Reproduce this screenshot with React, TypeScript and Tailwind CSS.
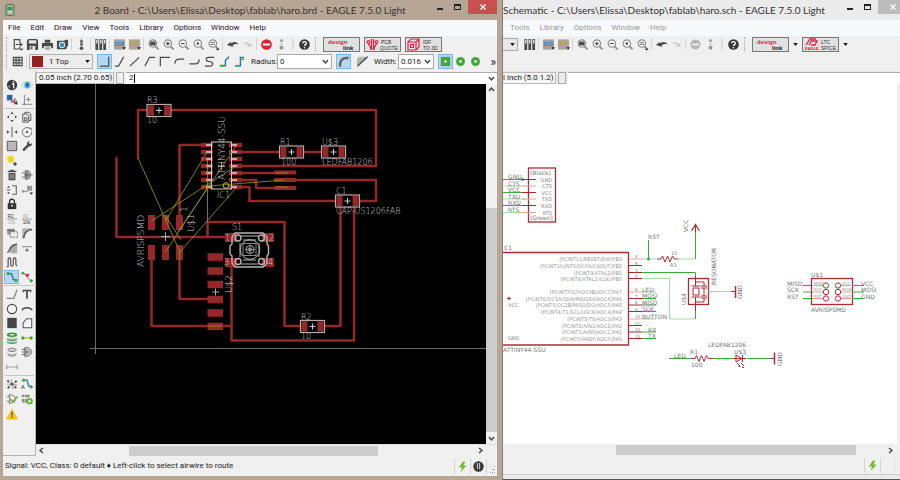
import type { ReactNode } from 'react';

const DARK = '#4a4a4a';
const RED = '#942727';
const SILVER = '#cacaca';
const GREEN = '#3ea63e';
const PALE_GREEN = '#a5dba5';
const MAROON = '#a52f35';
const PALE_RED = '#e5a3a3';

/* ---------- icons, all drawn on a 14 x 14 grid ---------- */

const magnifier = (inner: ReactNode) => (
  <g fill="none" stroke="#8a8a8a" strokeWidth="1.2">
    <circle cx="6.3" cy="6" r="4" fill="#fafafa" />
    <path d="M9.2 9 12.4 12.2" strokeWidth="1.8" />
    {inner}
  </g>
);

const pencil = <path d="M10 10h4l-2 2.4z" fill="#222" />;

const icons: Record<string, ReactNode> = {
  open: <g fill="none" stroke={DARK} strokeWidth="1.2"><path d="M9.5 5V1.8H3.5v10h6V9.5" /><path d="M5 7h6.500M9.5 5l2.300 2-2.300 2" /><path d="M9.500 11.500h4l-2 2z" fill="#222" stroke="none" /></g>,
  save: <g><path d="M1 2.500 2.500 1h9L13 2.500V13H1z" fill={DARK} /><path d="M3 2.500h8v3.500H3zM4 8.500h6V13H4z" fill="#e8e8e8" /><path d="M5 9.500h2V12H5z" fill={DARK} /></g>,
  print: <g fill={DARK}><path d="M4 2h6v3H4zM1 5.500h12V11h-2V9H3v2H1z" /><path d="M4.500 10h5v2.500h-5z" fill="#999" /></g>,
  cam: <g><path d="M1 3h8l1-1h3v7h-1l-1 3H1z" fill={DARK} /><circle cx="6.500" cy="7.500" r="3.400" fill="#eee" /><circle cx="6.500" cy="7.500" r="2.500" fill="#2196c9" /></g>,
  swap: <g fill={DARK}><path d="M7 1 9 4H5z" /><rect x="5.500" y="4.500" width="3" height="4" fill="#777" /><circle cx="7" cy="11" r="1.900" /></g>,
  library: <g fill={DARK}><path d="M1.500 1h3v12h-3zM5.800 1h3v12h-3zM10 1h3v12h-3z" /><path d="M2.300 2h1.400v4H2.300zM6.600 2H8v4H6.600zM10.800 2h1.400v4h-1.400z" fill="#eee" /></g>,
  scr: <g><path d="M1 1.500h12v11H1z" fill="#a3a3a3" /><text x="1.500" y="8.500" fontSize="5" fontWeight="700" fill="#3c7cb4" fontFamily="Liberation Sans, sans-serif">SCR</text>{pencil}</g>,
  ulp: <g><path d="M1 1.500h12v11H1z" fill="#aaa59e" /><text x="1.500" y="8.500" fontSize="5" fontWeight="700" fill="#d69534" fontFamily="Liberation Sans, sans-serif">ULP</text>{pencil}</g>,
  zoomFit: magnifier(<path d="M4 4.500h4.600v3H4z" fill={DARK} stroke={DARK} />),
  zoomIn: magnifier(<path d="M4.300 6h4M6.300 4v4" stroke={DARK} />),
  zoomOut: magnifier(<path d="M4.300 6h4" stroke={DARK} />),
  zoomRedraw: magnifier(<circle cx="6.300" cy="6" r=".8" fill={DARK} stroke={DARK} />),
  zoomSelect: magnifier(<><path d="M4 5h4.600M4 7h4.600" /><path d="M9.500 11.500h4l-2 2z" fill="#222" stroke="none" /></>),
  undo: <g><path d="M1 7.500 5.500 4v2c3-2.500 6-2 8 1-2.500-1-4.800-.5-6.500 1.300l1.200 1.500z" fill={DARK} /></g>,
  redo: <g><path d="M12.500 9 9.500 5v1.500C7 4 4 4 1.500 6c3-.5 5 .5 6 2.500L6 10z" fill="#cfcfcf" /></g>,
  stop: <g><circle cx="7" cy="7" r="5.700" fill="#d9232e" /><path d="M3.200 5.900h7.600v2.200H3.200z" fill="#fff" /></g>,
  stopOff: <g><circle cx="7" cy="7" r="5.500" fill="#b5b5b5" /><path d="M3.200 6h7.600v2H3.200z" fill="#f0f0f0" /></g>,
  traffic: <g fill="#9a9a9a"><circle cx="7" cy="3" r="1.600" /><circle cx="7" cy="6.500" r="1.200" fill="#c5c5c5" /><circle cx="7" cy="10.500" r="2.200" /></g>,
  help: <g><circle cx="7" cy="7" r="5.700" fill="#383838" /><path d="M5 5.700c.2-2.500 4-2.300 4 0 0 1.500-2 1.300-2 3" fill="none" stroke="#fff" strokeWidth="1.500" /><circle cx="7" cy="10.500" r=".9" fill="#fff" /></g>,
  grid: <path d="M2 2.500h10.500M2 5.500h10.500M2 8.500h10.500M2 11.500h10.500M2.500 2v10M5.500 2v10M8.500 2v10M12 2v10" stroke={DARK} strokeWidth="1.200" fill="none" />,
  bend0: <path d="M2 12h9.500V2" fill="none" stroke={DARK} strokeWidth="1.300" />,
  bend1: <path d="M2 12h4L11.500 2" fill="none" stroke={DARK} strokeWidth="1.300" />,
  bend2: <path d="M2 12 12 2.500" fill="none" stroke={DARK} strokeWidth="1.300" />,
  bend3: <path d="M2 12 7 2.500h6" fill="none" stroke={DARK} strokeWidth="1.300" />,
  bend4: <path d="M2.500 12V2.500H13" fill="none" stroke={DARK} strokeWidth="1.300" />,
  bend5: <path d="M2 9.500C2 5.500 4 4.500 7 4.500h5" fill="none" stroke={DARK} strokeWidth="1.300" />,
  bend6: <path d="M1.500 9.500h6c3.500 0 4.500-1.500 4.500-5" fill="none" stroke={DARK} strokeWidth="1.300" />,
  bend7: <path d="M12 2.500H6C2 2.500 3 7 6.500 7c5 0 5 5 1 5H2" fill="none" stroke={DARK} strokeWidth="1.300" />,
  bend8: <g fill="none" strokeWidth="1.500"><path d="M3 11.500h5V6l4-4" stroke="#2573b5" /><path d="M2 11.500h5" stroke="#44a838" strokeWidth="2" /></g>,
  bend9: <g fill="none" strokeWidth="1.500"><path d="M3 11.500h5V2.500h4" stroke="#2573b5" /><path d="M2 11.500h4M9 4.500h3" stroke="#44a838" strokeWidth="1.500" /></g>,
  miterRound: <g><path d="M2 13V9c0-4 3-7 7-7h4v3H9C6 5 5 7 5 9v4z" fill="#9b9b9b" /><path d="M3 12.500C3 6 6 3 12 2.500" fill="none" stroke={DARK} strokeWidth="1.300" /></g>,
  miterStraight: <g><path d="M1 12V4l2-2h10z" fill="#b5b5b5" /><path d="M1.500 12 12.500 2" stroke={DARK} strokeWidth="1.500" /></g>,
  viaSquare: <g><rect x="2" y="2" width="10" height="10" fill="#45a63c" /><circle cx="7" cy="7" r="1.300" fill="#fff" /></g>,
  viaRound: <g><circle cx="7" cy="7" r="4.800" fill="#45a63c" /><circle cx="7" cy="7" r="1.400" fill="#fff" /></g>,
  info: <g><circle cx="7" cy="7" r="6" fill="#383838" /><path d="M7 6.500 9 5v6" fill="none" stroke="#fff" strokeWidth="1.500" /><path d="M1 8.500 5 7v4z" fill="#888" /><circle cx="8.500" cy="3" r=".9" fill="#fff" /></g>,
  eye: <g><path d="M.8 7C4 2 10.500 2 13.200 7 10.500 12 4 12 .8 7z" fill="#fff" stroke="#a9b7c0" /><circle cx="7.300" cy="7" r="3.400" fill="#2fa2d8" /><circle cx="7.300" cy="7" r="1.200" fill="#134" /></g>,
  layers: <g><path d="M1 1h6.500v6.500H1z" fill="#2766a8" /><path d="M6 7.500h3.500V5h1.500v5H6z" fill="#cf3556" /><path d="M9 10h2.500V7.500H13V12H9z" fill="#4b9e54" />{pencil}</g>,
  mark: <path d="M4 1v12M1 12h12M6 6.500h5M8.500 4v5" stroke="#777" fill="none" strokeWidth="1" />,
  move: <g fill={DARK}><path d="m7 1 1.800 2.500H5.200zM7 13l1.800-2.500H5.200zM1 7l2.500-1.800v3.600zM13 7l-2.500-1.800v3.600z" /><path d="M4 4h1v1H4zM9 4h1v1H9zM4 9h1v1H4zM9 9h1v1H9z" fill="#999" /></g>,
  copy: <g fill="#e8e8e8" stroke={DARK}><path d="M4.500 1.500h5l2 2V11h-7z" /><path d="M2 3.500h5L9 5.500V13H2z" /><path d="M4 8h3v3H4z" fill="none" /></g>,
  mirror: <g fill={DARK}><path d="M6.500 1h1v12h-1zM1 5l3 2-3 2zM13 5l-3 2 3 2z" /></g>,
  rotate: <g fill="none" stroke="#666"><path d="M10.500 3A5.500 5.500 0 1 0 12.500 7" /><path d="M9 2.500h3v3" /><circle cx="7" cy="7" r="1" fill="#333" /></g>,
  group: <path d="M1.500 1.500h11v11h-11z" fill="#b8b8b8" stroke={DARK} />,
  change: <path d="M1.500 11 7 5.500C6.500 3 8 1.200 10.500 1.500L9 3.500l1.500 1.500 2-1.500c.7 2.500-1 4.500-3.500 4L3.500 13z" fill={DARK} />,
  cut: <g><circle cx="5.500" cy="5" r="4.200" fill="#f7d51b" /><circle cx="10.500" cy="10.500" r="2" fill={DARK} /></g>,
  trash: <g fill={DARK}><path d="M2 2h10v1.500H2zM5 1h4v1H5zM3 4.500h8V13H3z" /><path d="M5 5.500v6M7 5.500v6M9 5.500v6" stroke="#ccc" strokeWidth=".8" /></g>,
  add: <g fill="#aaa" stroke="#666"><path d="M5 2h2c3 0 4 2 4 5s-1 5-4 5H5zM1 4.500h4M1 9.500h4M11 7h2.500" /><path d="M4 7h6M7 4v6" stroke={DARK} /></g>,
  pinswap: <g fill="none" stroke="#666" strokeWidth="1.300"><path d="M7 2h5v10H7" /><path d="m3 2 1.600 2.500H1.400zM3 12l1.600-2.500H1.400z" fill={DARK} stroke="none" /><path d="M1 7h4" /></g>,
  replace: <g><path d="M1 7h3v3H1zM7 2h6v6H7z" fill="#999" /><path d="M4 8.500h4" stroke="#777" />{pencil}</g>,
  lock: <g><path d="M2 6h10v7H2z" fill="#333" /><path d="M4.200 6V4c0-3.300 5.600-3.300 5.600 0v2" fill="none" stroke="#333" strokeWidth="1.600" /><circle cx="7" cy="9" r="1" fill="#eee" /></g>,
  name: <g fontSize="5.500" fontFamily="Liberation Sans, sans-serif"><text x="2" y="5.500" fill="#333">R2</text><path d="M1 7h12" stroke="#777" strokeWidth=".8" /><text x="2" y="13" fill="#aaa">10k</text></g>,
  value: <g fontSize="5.500" fontFamily="Liberation Sans, sans-serif"><text x="2" y="5.500" fill="#aaa">R2</text><path d="M1 7h12" stroke="#777" strokeWidth=".8" /><text x="2" y="13" fill="#333">10k</text></g>,
  smash: <g><path d="M1.500 2h9v7h-9z" fill="#999" /><path d="M5 5.500h8.500V12H5z" fill="#eee" stroke="#666" strokeDasharray="2 1" /><path d="M1 4h9" stroke="#555" /></g>,
  miter: <g><path d="M1.500 13V1.500H13V4C8 4 5 7 5 13z" fill="#b5b5b5" /><path d="M3 13C3 7 7 3 13 3" fill="none" stroke={DARK} strokeWidth="1.500" /></g>,
  split: <g><path d="M4 13V6l3-3h6v10z" fill="#aaa" /><path d="M1.500 12.500C4 12 4 3 13 2.500" fill="none" stroke={DARK} strokeWidth="1.300" /></g>,
  optimize: <g stroke="#777" fill="none"><path d="M1 5.500h12" /><path d="M5 9.500h4M7 7.500v4" stroke={DARK} /></g>,
  meander: <path d="M1 12.500h1.500V4c0-2.500 3-2.500 3 0v6c0 2.500 3 2.500 3 0V4c0-2.500 3-2.500 3 0v6l1.500 2" fill="none" stroke={DARK} strokeWidth="1.300" />,
  route: <g><path d="M2 3h4.500l2 7H13" fill="none" stroke="#2573b5" strokeWidth="1.600" /><circle cx="2.500" cy="3" r="1.900" fill="#3ba43b" /><circle cx="11.500" cy="11" r="1.900" fill="#3ba43b" /></g>,
  ripup: <g><path d="M2 3h3l3 5 4 4" fill="none" stroke="#9aa" strokeWidth="1.300" /><path d="m4 4 6-1-2 5z" fill="#d2315a" /><circle cx="2" cy="2.500" r="1.600" fill="#3ba43b" /><circle cx="12" cy="11.500" r="1.800" fill="#3ba43b" /></g>,
  wire: <path d="M1 12h8l4-10" fill="none" stroke="#888" strokeWidth="1.500" />,
  text: <path d="M2 2h10v3h-1.500V3.800H8V12.500H6V3.800H3.500V5H2z" fill={DARK} />,
  circle: <circle cx="7" cy="7" r="5.400" fill="none" stroke={DARK} strokeWidth="1.300" />,
  arc: <path d="M1 8.500c2-4 10-4 12 0" fill="none" stroke={DARK} strokeWidth="1.600" />,
  rect: <path d="M1.500 1h11v12h-11z" fill="#454545" />,
  polygon: <path d="M2.500 12.500V7l4-5h6v10.500z" fill="#f5f5f5" stroke="#555" strokeWidth="1.200" />,
  via: <g><path d="M2 4.500v5c0 4 10 4 10 0v-5z" fill="#d9d9d9" /><ellipse cx="7" cy="3.200" rx="6" ry="2.500" fill="#35a045" /><ellipse cx="7" cy="3.200" rx="2.800" ry=".8" fill="#eee" /><path d="M1 7c1 2.500 11 2.500 12 0v1.500c-1 2.500-11 2.500-12 0zM1 10.500c1 2.500 11 2.500 12 0V12c-1 2.500-11 2.500-12 0z" fill="#35a045" /></g>,
  signal: <g><path d="M2 7h10" stroke="#e5a41c" strokeWidth="1.500" /><circle cx="2.200" cy="7" r="1.900" fill="#3ba43b" /><circle cx="11.800" cy="7" r="1.900" fill="#3ba43b" /></g>,
  hole: <g fill="#ccc" stroke="#777"><ellipse cx="7" cy="4.500" rx="5" ry="2" /><path d="M2 8.500c1 2.500 9 2.500 10 0M2 10c1 2.500 9 2.500 10 0" fill="none" /></g>,
  attribute: <g fill="none" stroke="#777"><path d="M4.500 1.500c6 0 8 3 8 5.500s-3 5.500-8 5.500z" fill="#bbb" /><path d="M1 4h5M1 7h8M1 10h5" stroke={DARK} /></g>,
  dimension: <g stroke="#777" fill="none"><path d="M1 4.500v5M13 4.500v5" /><path d="M2 7h10" strokeDasharray="2 1" /></g>,
  ratsnest: <g stroke={DARK} strokeWidth=".6" fill={DARK}><path d="M2 3.500 12 11M2 11 12 4M6 1.500 8 13M1 7l12 1" /><circle cx="2.500" cy="3.500" r="1" /><circle cx="11.500" cy="4" r="1" /><circle cx="3" cy="11" r="1" /><circle cx="11" cy="11" r="1" /><circle cx="7" cy="7" r="1.200" /></g>,
  auto: <g><path d="M3 2.500h4l2 7h3.500" fill="none" stroke="#2573b5" strokeWidth="1.600" /><circle cx="3" cy="2.500" r="1.800" fill="#3ba43b" /><circle cx="12" cy="10.500" r="1.800" fill="#3ba43b" /><text x="0" y="13" fontSize="6.500" fill="#222" fontFamily="Liberation Sans, sans-serif">A</text></g>,
  erc: <g fill="none" stroke="#666"><path d="M3.500 2C8 2 11 4 11.500 7 11 10 8 12 3.500 12 5 9 5 5 3.500 2zM1 4.500h3.500M1 9.500h3.500" /><path d="m5 7 3 3 5.500-6" stroke="#6aba2e" strokeWidth="1.800" /></g>,
  drc: <g><path d="M1 2h9v3H1zM1 7h6v4H1z" fill="#8c8c8c" /><path d="M4 2v8" stroke="#ddd" /><circle cx="10" cy="9.500" r="3.700" fill="#5fb52a" /><circle cx="10" cy="9.500" r="1.500" fill="#eee" /></g>,
  errors: <g><path d="M7 1 13.500 13H.5z" fill="#f7c51d" stroke="#e3ac10" strokeWidth=".6" /><path d="M6.300 5h1.500l-.3 4h-.9zM6.300 10h1.500v1.400H6.300z" fill="#222" /></g>,
  bolt: <path d="M7.500 1.500 3 8h3.500L5 13l6.500-7H8l2-4.500z" fill="#76bb2c" />,
  status: <g><circle cx="7" cy="7" r="5.600" fill="#383838" /><path d="M5.300 3h3.400v7H5.300z" fill="#eee" /><path d="M6.200 1.500h1.600v9.500H6.200z" fill="#383838" /></g>,
};

function Icon({ name, size = 13 }: { name: string; size?: number }) {
  return <svg width={size} height={size} viewBox="0 0 14 14" className="block shrink-0">{icons[name]}</svg>;
}

function Tool({ name, active = false }: { name: string; active?: boolean }) {
  return (
    <button
      type="button"
      aria-label={name}
      className={`flex h-[15px] w-[15px] shrink-0 items-center justify-center ${active ? 'bg-[#b5d8f5] outline outline-[#7fb6e6] -outline-offset-1' : ''}`}
    >
      <Icon name={name} />
    </button>
  );
}

function Tools({ names }: { names: string[] }) {
  return <div className="flex shrink-0">{names.map((n, i) => <Tool key={i} name={n} />)}</div>;
}

const Sep = () => <div className="mx-px h-3 w-0.5 shrink-0 border-l border-[#d5d5d5]" />;
const WideSep = () => <div className="mx-[3px] h-3 w-0.5 shrink-0 border-x border-[#dcdcdc]" />;
const Handle = () => <div className="ml-[3px] mr-0.5 h-[14px] w-0.5 shrink-0 border-l border-dotted border-[#a5a5a5]" />;

function Chevron({ dir = 'down' }: { dir?: 'up' | 'down' | 'left' | 'right' }) {
  const d = { up: 'M1 5 3.500 2 6 5', down: 'M1 2 3.500 5 6 2', left: 'M5 1 2 3.500 5 6', right: 'M2 1 5 3.500 2 6' }[dir];
  return <svg width="7" height="7" viewBox="0 0 7 7" className="block shrink-0"><path d={d} fill="none" stroke="#444" strokeWidth="1.400" /></svg>;
}

const Caret = () => <svg width="5" height="3" viewBox="0 0 6 4" className="block shrink-0"><path d="M0 0h6L3 4z" fill="#111" /></svg>;

/* ---------- brand buttons ---------- */

const brandBtn = 'flex h-[15px] w-[37px] shrink-0 items-center justify-center border border-[#777] bg-[#e0e0e0]';
const brandText = { fontFamily: 'Liberation Sans, sans-serif' };

function DesignLink() {
  return (
    <button type="button" className={brandBtn}>
      <svg width="33" height="13" viewBox="0 0 33 13" style={brandText}>
        <text x="3" y="6" fontSize="6" fontWeight="700" fill="#dc2346">design</text>
        <text x="18" y="12" fontSize="6" fontWeight="700" fill="#222">link</text>
      </svg>
    </button>
  );
}

function PcbQuote() {
  return (
    <button type="button" className={brandBtn}>
      <svg width="33" height="13" viewBox="0 0 33 13" style={brandText}>
        <g fill="none" stroke="#dc2346" strokeWidth="1.200"><circle cx="2.500" cy="4" r="1.400" /><circle cx="10.500" cy="4" r="1.400" /><path d="M2.500 5.500C2.500 8 5 7 5 12M10.500 5.500C10.500 8 8 7 8 12M5.500 1v11M7.500 1v11" /></g>
        <text x="15" y="6" fontSize="5" fill="#333">PCB</text>
        <text x="14" y="12" fontSize="5" fill="#333">QUOTE</text>
      </svg>
    </button>
  );
}

function IdfTo3d() {
  return (
    <button type="button" className={brandBtn}>
      <svg width="33" height="13" viewBox="0 0 33 13" style={brandText}>
        <g fill="none" stroke="#dc2346" strokeWidth="1.200"><path d="M1 4 4 1h8v8l-3 3H1zM1 4h8v8M9 4l3-3" /><path d="M3.500 6.500h3v3h-3z" /></g>
        <text x="16" y="6" fontSize="5" fill="#333">IDF</text>
        <text x="16" y="12" fontSize="5" fill="#333">TO 3D</text>
      </svg>
    </button>
  );
}

function LtcSpice() {
  return (
    <button type="button" className={brandBtn}>
      <svg width="33" height="13" viewBox="0 0 33 13" style={brandText}>
        <g fill="none" stroke="#dc2346" strokeWidth="1.300"><path d="M2 7 6 1h6M5 7l3-5M7 7h4l2-4H8" /></g>
        <text x="1" y="12" fontSize="4" fontWeight="700" fill="#dc2346">EAGLE</text>
        <text x="17" y="6" fontSize="5" fill="#333">LTC</text>
        <text x="17" y="12" fontSize="5" fill="#333">SPICE</text>
      </svg>
    </button>
  );
}

/* ---------- board drawing, in window coordinates ---------- */

const traces = [
  'M138 158V110H148', 'M170 110H376V166H240', 'M116.500 158V237H226', 'M204 145H179.500V216',
  'M240 152H280', 'M302 152H322', 'M240 173H276', 'M240 180H256V188H276', 'M240 187H249.500V201H337',
  'M290 180H376V201H358', 'M340.500 205V326H324', 'M354 205V340.500H231.500V262', 'M207.500 237V222H284.500V326H301',
  'M151.500 250V326H231', 'M179.500 250V299H210',
];

const airwires = [
  'M138 158 180 252', 'M151.500 221 236 166', 'M165.500 221 207 152', 'M178 232 236 146',
  'M180 252 236 188', 'M165.500 252 208 187', 'M207.500 159V222', 'M208 186 284 180', 'M179.500 252V260',
  'M165 215 181 240', 'M276 173H288', 'M276 187H288', 'M208 326H222',
];

const chipRows = [145, 152, 159, 166, 173, 180, 187];

function Smd({ x, y }: { x: number; y: number }) {
  return (
    <g>
      <rect x={x} y={y - 6} width="24" height="12" fill="#000" />
      <path d={`M${x + 1} ${y - 5}h6v10h-6zM${x + 17} ${y - 5}h6v10h-6z`} fill={RED} />
      <rect x={x} y={y - 6} width="24" height="12" fill="none" stroke="#b9a9a9" strokeWidth="1.200" />
      <path d={`M${x + 9} ${y}h6M${x + 12} ${y - 3}v6`} stroke="#ccc" />
    </g>
  );
}

function Board() {
  return (
    <svg width="450" height="360" viewBox="36 84 450 360" className="block" style={{ fontFamily: 'DejaVu Sans, sans-serif' }}>
      <path d="M95.500 84V354M90 348.500H486" stroke="#6a6a6a" fill="none" />
      <g fill="none" stroke={RED} strokeWidth="2.500" strokeLinecap="round" strokeLinejoin="round">
        {traces.map((d) => <path key={d} d={d} />)}
      </g>
      <g fill={RED}>
        {[151.5, 165.5, 179.5].map((x) => <path key={x} d={`M${x - 3.5} 215h7v15h-7zM${x - 3.5} 245h7v15h-7z`} />)}
        {[257, 271, 284.5, 299.5, 313, 326.5].map((y) => <rect key={y} x="207.500" y={y - 3.75} width="15.500" height="7.500" />)}
        {chipRows.map((y) => <path key={y} d={`M201 ${y - 2.2}h12v4.400h-12zM229 ${y - 2.2}h13v4.400h-13z`} />)}
        {[172.5, 180, 188].map((y) => <rect key={y} x="274" y={y - 2} width="22" height="4" />)}
        <path d="M225 233h12v9h-12zM262 233h12v9h-12zM225 258h12v9h-12zM262 258h12v9h-12z" />
      </g>
      {chipRows.map((y) => <path key={y} d={`M206 ${y}h5M231 ${y}h6`} stroke="#c4aaaa" strokeWidth="2" />)}
      <g fill="none" stroke={SILVER}>
        <rect x="211.500" y="142" width="20" height="47" stroke="#ccc" />
        <circle cx="226" cy="185.500" r="2.800" stroke="#c8c860" />
        <path d="M161 236.500h9M165.500 232v9M212 292h7M215.500 288.500v7M218 166h7M221.500 162v8" stroke="#aaa" />
      </g>
      <Smd x={147} y={110.5} />
      <Smd x={279.5} y={152} />
      <Smd x={321.5} y={152} />
      <Smd x={335.5} y={201} />
      <Smd x={300.5} y={326.5} />
      {/* push button */}
      <g fill="none" stroke="#b5b5b5">
        <path d="M235 233h28l4 4v7l1.500 2v8l-1.500 2v7l-4 4h-28l-3-4v-7l-2-2v-8l2-2v-7z" strokeWidth="1.400" />
        <path d="M241 236h17M241 264h17M240 243v14M259 243v14M243 240h13M243 260h13" />
        <circle cx="250" cy="249.500" r="9.800" />
        <rect x="243" y="243.500" width="13" height="12" stroke="#888" />
        <circle cx="250" cy="249.500" r="4" />
        <circle cx="250" cy="249.500" r="1.500" fill="#ccc" />
        <path d="M245 249.500h10M250 244.500v10" stroke="#888" />
        {[238, 261.5].map((x) => [238, 261.5].map((y) => <circle key={`${x}-${y}`} cx={x} cy={y} r="3" strokeWidth="1.400" />))}
      </g>
      <g fill="none" stroke="#9b9b22" strokeWidth=".8">
        {airwires.map((d) => <path key={d} d={d} />)}
      </g>
      <g fill={SILVER} fontSize="8" fontWeight="200">
        <text x="147" y="103">R3</text>
        <text x="147" y="123">10</text>
        <text x="280" y="145">R1</text>
        <text x="281" y="165">100</text>
        <text x="322" y="145">U$3</text>
        <text x="322" y="165">LEDFAB1206</text>
        <text x="336" y="194">C1</text>
        <text x="336" y="214">CAP-US1206FAB</text>
        <text x="217" y="198">IC1</text>
        <text x="232" y="230">S1</text>
        <text x="301" y="320">R2</text>
        <text x="301" y="339">10</text>
        <text x="225" y="241">1</text>
        <text x="269" y="241">2</text>
        <text x="224" y="265">3</text>
        <text x="268" y="265">4</text>
      </g>
      <g fill={SILVER} fontSize="9" fontWeight="200">
        <text transform="translate(225 180) rotate(-90)">ATTINY44-SSU</text>
        <text transform="translate(144 267) rotate(-90)">AVRISPSMD</text>
        <text transform="translate(194 232) rotate(-90)">U$1</text>
        <text transform="translate(187 212) rotate(-90)">1</text>
        <text transform="translate(232 293) rotate(-90)">U$2</text>
      </g>
    </svg>
  );
}

/* ---------- schematic drawing, in window coordinates ---------- */

const header = [
  { net: 'GND', y: 179.5 }, { net: 'CTS', y: 186 }, { net: 'VCC', y: 192.5 },
  { net: 'TXD', y: 199 }, { net: 'RXD', y: 205.5 }, { net: 'RTS', y: 212.5 },
];

const pins = [
  { n: 4, y: 259, name: '(PCINT11/RESET/DW)PB3' },
  { n: 5, y: 265.5, name: '(PCINT10/INT0/OC0A/CKOUT)PB2' },
  { n: 3, y: 272.5, name: '(PCINT9/XTAL2)PB1' },
  { n: 2, y: 278.5, name: '(PCINT8/XTAL1/CLKI)PB0' },
  { n: 6, y: 292, name: '(PCINT7/ICP/OC0B/ADC7)PA7', net: 'LED' },
  { n: 7, y: 298.5, name: '(PCINT6/OC1A/SDA/MOSI/DI/ADC6)PA6', net: 'MOSI' },
  { n: 8, y: 305, name: '(PCINT5/OC1B/MISO/DO/ADC5)PA5', net: 'MISO' },
  { n: 9, y: 311.5, name: '(PCINT4/T1/SCL/USCK/ADC4)PA4', net: 'SCK' },
  { n: 10, y: 319, name: '(PCINT3/T0/ADC3)PA3', net: 'BUTTON' },
  { n: 11, y: 325.5, name: '(PCINT2/AIN1/ADC2)PA2' },
  { n: 12, y: 332, name: '(PCINT1/AIN0/ADC1)PA1', net: 'RX' },
  { n: 13, y: 338.5, name: '(PCINT0/AREF/ADC0)PA0', net: 'TX' },
];

const isp = [
  { l: 'MISO', r: 'VCC', y: 285.5 }, { l: 'SCK', r: 'MOSI', y: 292 }, { l: 'RST', r: 'GND', y: 298.5 },
];

function Schematic() {
  return (
    <svg width="394" height="360" viewBox="503 84 394 360" className="block" style={{ fontFamily: 'DejaVu Sans, sans-serif' }}>
      <g fill="none" stroke={MAROON}>
        <rect x="528.500" y="168" width="27" height="54" strokeWidth="1.300" />
        <path d="M503 252.500H628.500V345H503" strokeWidth="1.300" />
        <path d="M507 298.500h4M509 296.500v4" />
        <rect x="688.500" y="278.500" width="20" height="26" strokeWidth="1.300" />
        <path d="M695.500 276v10M693 288h6v7h-6zM691.500 286h9M691.500 297h9M695.500 297v14M696 282h8v4M701 286h6M701 288h6M704 288v8M701 296h6M701 298h6M704 298v4h-8" />
        <rect x="811.500" y="278.500" width="41" height="26" strokeWidth="1.300" />
        <path d="M695.500 232V225M691.500 231 695.500 224.500 699.500 231" strokeWidth="1.200" />
        <path d="M657 259h4l1.500-3 2.500 6 2.500-6 2.500 6 2.500-6 2 3h4" />
        <path d="M690 358.500h5l1.500-3 2.500 6 2.500-6 2.500 6 2.500-6 2 3h5" />
        <path d="M731 291.500h4M770 358.500h4M732 358.500h14" />
        <path d="M735.500 286v12M774.500 352.500v12" strokeWidth="1.500" />
        <path d="M736 355v7l6-3.500zM742.500 355v7" />
        <path d="m737 363 3 3M741 363l3 3M738.500 366.500h2M742 367.500h2" />
      </g>
      <g fill="none" stroke={PALE_RED}>
        <path d="M708 291.500h8" />
      </g>
      <g fill="none" stroke={PALE_GREEN}>
        <path d="M679 259h16M642 278.500h27.500v40.500H695M716 291.500h15M642 259h14" />
      </g>
      <g fill="none" stroke={GREEN}>
        <path d="M648.500 240v19M695.500 259v-27M642 272.500h53.500v4M695.500 311v8M669 358.500h22M713 358.500h20M747 358.500h23" />
      </g>
      <circle cx="648.500" cy="259" r="1.500" fill={GREEN} />
      <circle cx="522.500" cy="179.500" r="1.500" fill={GREEN} />

      {header.map((h, i) => (
        <g key={h.net}>
          <path d={`M503 ${h.y}h22`} stroke={i % 2 ? PALE_GREEN : GREEN} />
          <path d={`M522 ${h.y}h14`} stroke={i % 2 ? PALE_RED : MAROON} />
          <text x="508" y={h.y - 0.5} fontSize="6" fill="#777">{h.net}</text>
          <text x="552" y={h.y + 2} fontSize="5" fill="#888" textAnchor="end">{h.net}</text>
        </g>
      ))}

      {pins.map((p) => (
        <g key={p.n}>
          <path d={`M629 ${p.y}h13`} stroke={[4, 6, 10].includes(p.n) ? PALE_RED : MAROON} />
          {p.net && <path d={`M642 ${p.y}h14`} stroke={[6, 10].includes(p.n) ? PALE_GREEN : GREEN} />}
          <text x="635" y={p.y - 1} fontSize="4" fill="#777">{p.n}</text>
          <text x="622" y={p.y + 2} fontSize="5" fill="#999" textAnchor="end">{p.name}</text>
          {p.net && <text x={p.n > 11 ? 648 : 642} y={p.y - 0.5} fontSize="6" fill="#777">{p.net}</text>}
        </g>
      ))}

      {isp.map((p) => (
        <g key={p.l} fill="none">
          <path d={`M803 ${p.y}h8M853 ${p.y}h11`} stroke={GREEN} />
          <path d={`M812 ${p.y}h11M841 ${p.y}h12`} stroke={PALE_RED} />
          <circle cx="826" cy={p.y} r="2.700" stroke={MAROON} />
          <circle cx="838" cy={p.y} r="2.700" stroke={MAROON} />
          <text x="787" y={p.y} fontSize="6" fill="#777">{p.l}</text>
          <text x="861" y={p.y} fontSize="6" fill="#777">{p.r}</text>
          <text x="814" y={p.y - 1} fontSize="4" fill="#999">{p.l}</text>
          <text x="842" y={p.y - 1} fontSize="4" fill="#999">{p.r}</text>
        </g>
      ))}

      <g fill="#777" fontSize="6">
        <text x="530" y="175">(Black)</text>
        <text x="530" y="220">(Green)</text>
        <text x="504" y="250">C1</text>
        <text x="503" y="352">ATTINY44-SSU</text>
        <text x="648" y="239">RST</text>
        <text x="690" y="354">R1</text>
        <text x="691" y="367">100</text>
        <text x="674" y="358">LED</text>
        <text x="708" y="347">LEDFAB1206</text>
        <text x="734" y="354">U$3</text>
        <text x="811" y="277">U$1</text>
        <text x="811" y="312">AVRISPSMD</text>
        <text transform="translate(688 232) rotate(-90)">VCC</text>
        <text transform="translate(716 285) rotate(-90)">RESONATOR</text>
        <text transform="translate(686 305) rotate(-90)">U$4</text>
        <text transform="translate(742 299) rotate(-90)">GND</text>
        <text transform="translate(782 366) rotate(-90)">GND</text>
      </g>
      <g fill="#888" fontSize="5">
        <text x="671" y="255">10</text>
        <text x="670" y="267">R3</text>
        <text x="508" y="307">VCC</text>
        <text x="508" y="340">GND</text>
      </g>
    </svg>
  );
}

/* ---------- windows ---------- */

const menus = ['File', 'Edit', 'Draw', 'View', 'Tools', 'Library', 'Options', 'Window', 'Help'];

const palette = [
  { box: 'h-[30px]', items: ['info', 'eye', 'layers', 'mark'] },
  {
    box: 'h-[174px]',
    items: ['move', 'copy', 'mirror', 'rotate', 'group', 'change', 'cut', '', 'trash', 'add', 'pinswap', 'replace',
      'lock', '', 'name', 'value', 'smash', 'miter', 'split', 'optimize', 'meander', '', 'route', 'ripup'],
  },
  { box: 'h-[87px]', items: ['wire', 'text', 'circle', 'arc', 'rect', 'polygon', 'via', 'signal', 'hole', 'attribute', 'dimension', ''] },
  { box: 'h-[44px]', items: ['ratsnest', 'auto', 'erc', 'drc', 'errors', ''] },
];

function Palette() {
  return (
    <aside className="flex w-[33px] shrink-0 flex-col border-b border-r border-[#b5b5b5] bg-[#f0f0f0] px-px pt-[6px]">
      {palette.map((g, i) => (
        <div key={i} className={i ? 'mt-px border-t border-[#c8c8c8] pt-px' : ''}>
          <div className={`grid auto-rows-fr grid-cols-2 ${g.box}`}>
            {g.items.map((n, k) => n
              ? (
                <button key={k} type="button" aria-label={n} className={`flex items-center justify-center ${n === 'route' ? 'bg-[#b5d8f5] outline outline-[#7fb6e6] -outline-offset-1' : ''}`}>
                  <Icon name={n} size={12} />
                </button>
              )
              : <span key={k} />)}
          </div>
        </div>
      ))}
    </aside>
  );
}

function BoardWindow() {
  return (
    <section className="flex w-[503px] shrink-0 flex-col border-r border-[#8b7b6e] bg-[#b7a595] pb-1 pl-[3px] pr-[5px]">
      <header className="flex h-5 items-start">
        <div className="flex w-[60px] items-center pl-0.5 pt-1">
          <svg width="10" height="12" viewBox="0 0 10 12"><rect x="1" y=".5" width="8" height="11" rx="1" fill="#9db49a" stroke="#55705a" /><path d="M2.500 3h5v3h-5z" fill="#3b9a4e" /><path d="M3 8h4" stroke="#eee" /></svg>
        </div>
        <h1 className="flex-1 whitespace-nowrap text-center font-[Lato,sans-serif] text-[10px] leading-5 text-[#3a332e]">
          2 Board - C:\Users\Elissa\Desktop\fablab\haro.brd - EAGLE 7.5.0 Light
        </h1>
        <div className="flex w-[60px] justify-end">
          <button type="button" aria-label="Minimize" className="h-[13px] w-[17px] shrink-0"><span className="mt-1 block h-0.5 w-[6px] bg-[#222]" /></button>
          <button type="button" aria-label="Maximize" className="h-[13px] w-[14px] shrink-0"><span className="block h-[6px] w-[7px] border border-t-2 border-[#222]" /></button>
          <button type="button" aria-label="Close" className="flex h-[14px] w-[29px] shrink-0 items-center justify-center bg-[#c9504e]">
            <svg width="6" height="6" viewBox="0 0 6 6"><path d="M.5.5l5 5M5.500.5l-5 5" stroke="#fff" strokeWidth="1.300" /></svg>
          </button>
        </div>
      </header>

      <nav className="flex h-4 items-center gap-[10px] bg-[#f7f8fa] pl-[5px] text-[8px] text-[#2d1420]">
        {menus.map((m) => <button key={m} type="button">{m}</button>)}
      </nav>

      <div className="flex h-4 items-center bg-[#f0f0f0]">
        <Handle />
        <Tools names={['open', 'save', 'print', 'cam']} />
        <Sep />
        <Tool name="swap" />
        <Sep />
        <Tool name="library" />
        <Sep />
        <Tools names={['scr', 'ulp']} />
        <Sep />
        <Tools names={['zoomFit', 'zoomIn', 'zoomOut', 'zoomRedraw', 'zoomSelect']} />
        <Sep />
        <Tools names={['undo', 'redo']} />
        <Sep />
        <Tools names={['stop', 'traffic']} />
        <WideSep />
        <Tool name="help" />
        <Handle />
        <div className="ml-1 flex gap-1">
          <DesignLink />
          <PcbQuote />
          <IdfTo3d />
        </div>
      </div>

      <div className="flex h-[19px] items-center bg-[#f0f0f0] text-[8px] text-[#1c1c1c]">
        <Handle />
        <Tool name="grid" />
        <Sep />
        <div className="flex h-[15px] w-[64px] items-center border border-[#b0b0b0] bg-[#ececec] px-0.5">
          <span className="h-[11px] w-[11px] shrink-0 bg-[#952020]" />
          <select aria-label="Layer" className="min-w-0 flex-1 appearance-none pl-[6px] outline-none">
            <option>1 Top</option>
          </select>
          <Caret />
        </div>
        <div className="ml-1 flex">
          <Tool name="bend0" active />
          <Tools names={['bend1', 'bend2', 'bend3', 'bend4', 'bend5', 'bend6', 'bend7', 'bend8', 'bend9']} />
        </div>
        <label htmlFor="radius" className="ml-1 w-[26px] whitespace-nowrap">Radius:</label>
        <div className="flex h-[15px] w-[55px] items-center border border-[#aaa] bg-white px-0.5">
          <select id="radius" className="min-w-0 flex-1 appearance-none outline-none"><option>0</option></select>
          <Chevron />
        </div>
        <div className="ml-1 flex">
          <Tool name="miterRound" active />
          <span className="w-1" />
          <Tool name="miterStraight" />
        </div>
        <label htmlFor="width" className="ml-1 w-[24px] whitespace-nowrap">Width:</label>
        <div className="flex h-[15px] w-[36px] items-center border border-[#aaa] bg-white px-0.5">
          <select id="width" className="min-w-0 flex-1 appearance-none outline-none"><option>0.016</option></select>
          <Chevron />
        </div>
        <div className="ml-1 flex">
          <Tool name="viaSquare" active />
          <Tools names={['viaRound', 'viaRound']} />
        </div>
        <button type="button" aria-label="More" className="ml-auto pr-px text-[12px] leading-3">»</button>
      </div>

      <div className="flex min-h-0 flex-1 bg-[#f0f0f0]">
        <Palette />
        <div className="flex min-w-0 flex-1 flex-col">
          <div className="flex h-[13px] items-center gap-0.5 text-[8px] leading-3 text-[#222]">
            <output className="h-3 w-[78px] whitespace-nowrap border border-[#bbb] bg-[#f5f5f5] pl-0.5 leading-[10px]">0.05 inch (2.70 0.65)</output>
            <span className="h-3 w-[8px] border border-[#aaa]" />
            <div className="flex h-3 flex-1 items-center border-t border-[#aaa] bg-white pl-[3px] pr-0.5">
              <input aria-label="Command" defaultValue="2" className="h-[9px] w-[6px] border-r border-black outline-none" />
              <span className="flex-1" />
              <Chevron />
            </div>
          </div>
          <div className="flex min-h-0 flex-1">
            <div className="min-w-0 flex-1 overflow-hidden bg-black"><Board /></div>
            <div className="flex w-[11px] shrink-0 flex-col items-center pb-0.5 pt-0.5">
              <Chevron dir="up" />
              <div className="my-[3px] flex w-full flex-1 flex-col">
                <div className="flex-[113]" />
                <div className="flex-[227] bg-[#cdcdcd]" />
              </div>
              <Chevron />
            </div>
          </div>
          <div className="flex h-[12px] shrink-0 items-center border-t border-[#ddd] pl-0.5 pr-[13px]">
            <Chevron dir="left" />
            <div className="mx-1 flex h-[10px] flex-1">
              <div className="flex-[80]" />
              <div className="flex-[249] bg-[#cdcdcd]" />
              <div className="flex-[95]" />
            </div>
            <Chevron dir="right" />
          </div>
        </div>
      </div>

      <footer className="flex h-5 items-center bg-[#f0f0f0] pl-0.5 text-[8px] text-[#1c1c1c]">
        <span className="flex-1 whitespace-nowrap">Signal: VCC, Class: 0 default ♦ Left-click to select airwire to route</span>
        <span className="border-l border-[#d5d5d5]"><Tool name="bolt" /></span>
        <span className="border-x border-[#d5d5d5]"><Tool name="status" /></span>
        <svg width="10" height="16" viewBox="0 0 10 16"><path d="M7 8h1v1H7zM5 11h1v1H5zM7 11h1v1H7zM3 14h1v1H3zM5 14h1v1H5zM7 14h1v1H7z" fill="#999" /></svg>
      </footer>
    </section>
  );
}

function SchematicWindow() {
  return (
    <section className="flex min-w-0 flex-1 flex-col overflow-hidden border-b border-[#555] bg-[#ebebeb]">
      <header className="flex h-5 items-start">
        <h1 className="flex-1 whitespace-nowrap font-[Lato,sans-serif] text-[10px] leading-5 text-[#333]">
          Schematic - C:\Users\Elissa\Desktop\fablab\haro.sch - EAGLE 7.5.0 Light
        </h1>
        <button type="button" aria-label="Minimize" className="h-[13px] w-[17px] shrink-0"><span className="mt-1 block h-0.5 w-[6px] bg-[#222]" /></button>
        <button type="button" aria-label="Maximize" className="h-[13px] w-[14px] shrink-0"><span className="block h-[6px] w-[7px] border border-t-2 border-[#222]" /></button>
        <button type="button" aria-label="Close" className="flex h-[14px] w-[22px] shrink-0 items-center justify-center bg-[#bcbcbc] pl-2">
          <svg width="6" height="6" viewBox="0 0 6 6"><path d="M.5.5l5 5M5.500.5l-5 5" stroke="#fff" strokeWidth="1.300" /></svg>
        </button>
      </header>

      <nav className="flex h-4 items-center gap-[10px] bg-[#f7f8fa] pl-[7px] text-[8px] text-[#9a9a9a]">
        {menus.slice(4).map((m) => <button key={m} type="button">{m}</button>)}
      </nav>

      <div className="flex h-4 items-center bg-[#f0f0f0]">
        <button type="button" aria-label="Sheet" className="mr-1 flex h-[13px] w-[15px] items-center justify-center border border-l-0 border-[#aaa] bg-[#e8e8e8] pl-1"><Caret /></button>
        <Tool name="library" />
        <Sep />
        <Tools names={['scr', 'ulp']} />
        <Sep />
        <Tools names={['zoomFit', 'zoomIn', 'zoomOut', 'zoomRedraw', 'zoomSelect']} />
        <Sep />
        <Tools names={['undo', 'redo']} />
        <Sep />
        <Tools names={['stopOff', 'traffic']} />
        <WideSep />
        <Tool name="help" />
        <Handle />
        <div className="ml-1 flex items-center gap-1">
          <DesignLink />
          <Caret />
          <LtcSpice />
          <Caret />
        </div>
      </div>
      <div className="h-[19px] bg-[#f0f0f0]" />

      <div className="flex h-[13px] items-center gap-0.5 text-[8px] leading-3 text-[#222]">
        <output className="h-3 w-[53px] whitespace-nowrap border border-l-0 border-[#bbb] bg-[#f5f5f5] leading-[10px]">l inch (5.0 1.2)</output>
        <span className="h-3 w-[8px] border border-[#aaa]" />
        <input aria-label="Command" className="h-3 min-w-0 flex-1 border-t border-[#aaa] bg-white outline-none" />
      </div>
      <div className="flex min-h-0 flex-1">
        <div className="min-w-0 flex-1 overflow-hidden bg-white"><Schematic /></div>
        <div className="w-[3px] shrink-0 bg-[#f0f0f0]" />
      </div>
      <div className="flex h-[12px] shrink-0 items-center bg-[#f0f0f0] pr-[6px]">
        <div className="flex h-[10px] flex-1">
          <div className="flex-[113]" />
          <div className="flex-[240] bg-[#cdcdcd]" />
          <div className="flex-[31]" />
        </div>
        <Chevron dir="right" />
      </div>
      <footer className="flex h-[19px] items-center justify-end border-b border-[#ccc] bg-[#f0f0f0] pr-[5px]">
        <span className="border-x border-[#d5d5d5]"><Tool name="bolt" /></span>
        <span className="h-[15px] w-[14px] border-r border-[#ddd]" />
      </footer>
      <div className="h-1" />
    </section>
  );
}

export default function App() {
  return (
    <main className="flex h-screen overflow-hidden font-[Roboto,sans-serif]">
      <BoardWindow />
      <SchematicWindow />
    </main>
  );
}
